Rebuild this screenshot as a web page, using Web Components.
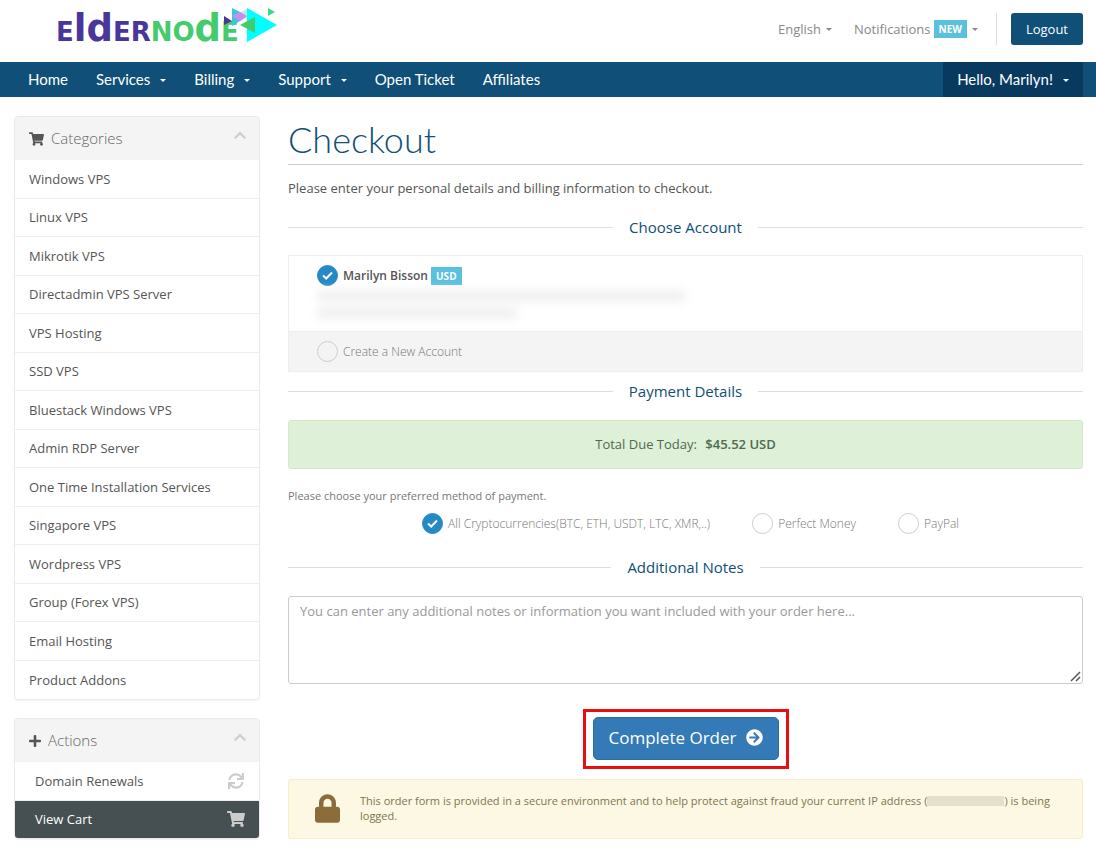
<!DOCTYPE html>
<html lang="en">
<head>
<meta charset="utf-8">
<meta name="viewport" content="width=device-width, initial-scale=1">
<title>Checkout - Eldernode</title>
<style>
body {
  margin: 0;
  background: #fff;
  color: #555;
  font: 13px/18px "Open Sans", "Noto Sans", sans-serif;
}
</style>
</head>
<body>
<checkout-page></checkout-page>

<script>
const icons = {
  cart: ['0 0 576 512', 'M528.12 301.319l47.273-208C578.806 78.301 567.391 64 551.99 64H159.208l-9.166-44.81C147.758 8.021 137.93 0 126.529 0H24C10.745 0 0 10.745 0 24v16c0 13.255 10.745 24 24 24h69.883l70.248 343.435C147.325 417.1 136 435.222 136 456c0 30.928 25.072 56 56 56s56-25.072 56-56c0-15.674-6.447-29.835-16.824-40h209.647C430.447 426.165 424 440.326 424 456c0 30.928 25.072 56 56 56s56-25.072 56-56c0-22.172-12.888-41.332-31.579-50.405l5.517-24.276c3.413-15.018-8.002-29.319-23.403-29.319H218.117l-6.545-32h293.145c11.206 0 20.92-7.754 23.403-18.681z'],
  plus: ['0 0 448 512', 'M416 208H272V64c0-17.67-14.33-32-32-32h-32c-17.67 0-32 14.33-32 32v144H32c-17.67 0-32 14.33-32 32v32c0 17.67 14.33 32 32 32h144v144c0 17.67 14.33 32 32 32h32c17.67 0 32-14.33 32-32V304h144c17.67 0 32-14.33 32-32v-32c0-17.67-14.33-32-32-32z'],
  lock: ['0 0 448 512', 'M400 224h-24v-72C376 68.2 307.8 0 224 0S72 68.2 72 152v72H48c-26.5 0-48 21.5-48 48v192c0 26.5 21.5 48 48 48h352c26.5 0 48-21.5 48-48V272c0-26.5-21.5-48-48-48zm-104 0H152v-72c0-39.7 32.3-72 72-72s72 32.3 72 72v72z'],
  arrow: ['0 0 512 512', 'M256 8c137 0 248 111 248 248S393 504 256 504 8 393 8 256 119 8 256 8zm-28.9 143.6l75.5 72.4H120c-13.3 0-24 10.7-24 24v16c0 13.3 10.7 24 24 24h182.6l-75.5 72.4c-9.7 9.3-9.9 24.8-.4 34.3l11 10.9c9.4 9.4 24.6 9.4 33.9 0L404.3 273c9.4-9.4 9.4-24.6 0-33.9L271.6 106.3c-9.4-9.4-24.6-9.4-33.9 0l-11 10.9c-9.5 9.6-9.3 25.1.4 34.4z'],
  refresh: ['0 0 512 512', 'M440.65 12.57l4 82.77A247.16 247.16 0 0 0 255.83 8C134.73 8 33.91 94.92 12.29 209.82A12 12 0 0 0 24.09 224h49.05a12 12 0 0 0 11.67-9.26 175.91 175.91 0 0 1 317-56.94l-101.46-4.86a12 12 0 0 0-12.57 12v47.41a12 12 0 0 0 12 12H500a12 12 0 0 0 12-12V12a12 12 0 0 0-12-12h-47.37a12 12 0 0 0-11.98 12.57zM255.83 432a175.61 175.61 0 0 1-146-77.8l101.8 4.87a12 12 0 0 0 12.57-12v-47.4a12 12 0 0 0-12-12H12a12 12 0 0 0-12 12V500a12 12 0 0 0 12 12h47.35a12 12 0 0 0 12-12.6l-4.15-82.57A247.17 247.17 0 0 0 255.83 504c121.11 0 221.93-86.92 243.55-201.82a12 12 0 0 0-11.8-14.18h-49.05a12 12 0 0 0-11.67 9.26A175.86 175.86 0 0 1 255.83 432z'],
  chevron: ['0 0 12 12', 'M0 7.6L6 1.6l6 6-1.5 1.5L6 4.6 1.5 9.1z'],
  caret: ['0 0 6 3', 'M0 0h6L3 3z']
};

// Attach an open shadow root filled with the given markup
function render(el, html) {
  const template = document.createElement('template');
  template.innerHTML = html;
  el.attachShadow({ mode: 'open' }).appendChild(template.content.cloneNode(true));
}

class UiIcon extends HTMLElement {
  constructor() {
    super();
    const [box, path] = icons[this.getAttribute('name')];
    render(this, `
<style>
:host { display: inline-flex; flex: none; }
svg { width: 100%; height: 100%; fill: currentColor; }
</style>
<svg viewBox="${box}" aria-hidden="true"><path d="${path}"/></svg>`);
  }
}

class UiBadge extends HTMLElement {
  constructor() {
    super();
    render(this, `
<style>
:host {
  display: inline-block;
  padding: 0 5px;
  background: #5bc0de;
  color: #fff;
  font-size: 10px;
  font-weight: 700;
  line-height: 18px;
}
</style>
<slot></slot>`);
  }
}

class SiteLogo extends HTMLElement {
  constructor() {
    super();
    render(this, `
<style>
:host { display: block; position: relative; }
a {
  display: block;
  color: #483699;
  font: 700 37px/44px "DejaVu Sans", sans-serif;
  font-variant: small-caps;
  text-decoration: none;
}
.tall { font-variant: normal; }
.green { color: #44cb6d; }
svg { position: absolute; left: 167px; top: 1px; width: 56px; height: 38px; }
</style>
<a href="#">e<span class="tall">ld</span>er<span class="green">no<span class="tall">d</span>e</span></a>
<svg viewBox="0 0 56 38" aria-hidden="true">
  <path fill="#3fc4d8" d="M9 0l16 8-16 10z"/>
  <path fill="#b9efdc" d="M18 4l6-3v12z"/>
  <path fill="#c88cf2" d="M9 8l8-4 7 4-7 5z"/>
  <path fill="#0ff" d="M24 0l30 17-30 17z"/>
  <path fill="#483699" d="M1 8l8 5-8 4z"/>
  <path fill="#44cb6d" d="M32 9v16l-15-8z"/>
  <path fill="#35d98c" d="M45 0l7 4-7 4z"/>
</svg>`);
  }
}

class SiteHeader extends HTMLElement {
  constructor() {
    super();
    render(this, `
<style>
:host {
  display: flex;
  align-items: center;
  justify-content: space-between;
  padding: 6px 13px 10px 56px;
  min-height: 46px;
}
.tools { display: flex; align-items: center; }
button {
  display: flex;
  align-items: center;
  padding: 0;
  border: 0;
  background: none;
  color: #888;
  font: inherit;
  cursor: pointer;
}
button + button { margin-left: 22px; }
ui-badge { margin: 0 5px 0 3px; }
ui-icon { width: 6px; height: 3px; }
.lang ui-icon { margin-left: 5px; }
.logout {
  margin-left: 14px;
  padding: 7px 15px;
  border-radius: 3px;
  background: #0f4f78;
  color: #fff;
  text-decoration: none;
}
.line { width: 1px; height: 32px; margin-left: 18px; background: #ddd; }
</style>
<site-logo></site-logo>
<div class="tools">
  <button class="lang">English <ui-icon name="caret"></ui-icon></button>
  <button>Notifications <ui-badge>NEW</ui-badge><ui-icon name="caret"></ui-icon></button>
  <span class="line"></span>
  <a class="logout" href="#">Logout</a>
</div>`);
  }
}

class NavItem extends HTMLElement {
  constructor() {
    super();
    render(this, `
<style>
:host { display: block; }
:host([active]) { background: #083a60; }
a {
  display: flex;
  align-items: center;
  padding: 0 14px 1px;
  color: #fff;
  font: 15px/34px Lato, sans-serif;
  text-decoration: none;
}
ui-icon { width: 6px; height: 3px; margin: 3px 0 0 10px; }
</style>
<a href="#"><slot></slot>${this.hasAttribute('menu') ? '<ui-icon name="caret"></ui-icon>' : ''}</a>`);
  }
}

class SiteNav extends HTMLElement {
  constructor() {
    super();
    render(this, `
<style>
:host { display: block; background: #0f4f78; }
nav { display: flex; padding: 0 13px 0 14px; }
.user { margin-left: auto; }
</style>
<nav>
  <nav-item>Home</nav-item>
  <nav-item menu>Services</nav-item>
  <nav-item menu>Billing</nav-item>
  <nav-item menu>Support</nav-item>
  <nav-item>Open Ticket</nav-item>
  <nav-item>Affiliates</nav-item>
  <nav-item class="user" menu active>Hello, Marilyn!</nav-item>
</nav>`);
  }
}

class SidePanel extends HTMLElement {
  constructor() {
    super();
    render(this, `
<style>
:host {
  display: block;
  overflow: hidden;
  border: 1px solid #eaeaea;
  border-radius: 4px;
  box-shadow: 0 1px 1px rgba(0, 0, 0, .05);
}
header {
  display: flex;
  align-items: center;
  padding: 11px 13px 11px 14px;
  background: #f4f4f4;
}
header > ui-icon { width: 15px; height: 14px; color: #555; }
:host([icon="plus"]) header > ui-icon { width: 12px; }
h3 {
  flex: 1;
  margin: 0 0 0 7px;
  color: #666;
  font-size: 15px;
  font-weight: 300;
  line-height: 21px;
}
button { display: flex; padding: 0 0 6px; border: 0; background: none; color: #ccc; cursor: pointer; }
button ui-icon { width: 12px; height: 12px; }
.items { display: grid; }
.items[hidden] { display: none; }
:host([icon="cart"]) .items { grid-auto-rows: 1fr; min-height: 539px; }
</style>
<header>
  <ui-icon name="${this.getAttribute('icon')}"></ui-icon>
  <h3>${this.getAttribute('heading')}</h3>
  <button aria-label="Toggle"><ui-icon name="chevron"></ui-icon></button>
</header>
<div class="items"><slot></slot></div>`);

    this.shadowRoot.querySelector('button').addEventListener('click', () => {
      const items = this.shadowRoot.querySelector('.items');
      items.hidden = !items.hidden;
    });
  }
}

class PanelItem extends HTMLElement {
  constructor() {
    super();
    const icon = this.getAttribute('icon');
    render(this, `
<style>
:host { display: grid; border-bottom: 1px solid #eee; }
:host(:last-of-type) { border-bottom: 0; }
a {
  display: flex;
  align-items: center;
  justify-content: space-between;
  padding: 9px 14px;
  color: #555;
  text-decoration: none;
}
a.has-icon { padding: 10px 14px 10px 20px; }
:host([active]) a { padding-top: 9px; background: #464f51; color: #fff; }
ui-icon { width: 18px; height: 16px; color: #ccc; }
</style>
<a href="#" class="${icon ? 'has-icon' : ''}"><slot></slot>${icon ? `<ui-icon name="${icon}"></ui-icon>` : ''}</a>`);
  }
}

class SubHeading extends HTMLElement {
  constructor() {
    super();
    render(this, `
<style>
:host { display: flex; align-items: center; gap: 16px; }
:host::before, :host::after { content: ""; flex: 1; height: 1px; background: #ddd; }
h2 { margin: 0; color: #0f4f78; font-size: 15px; font-weight: 400; line-height: 20px; }
</style>
<h2><slot></slot></h2>`);
  }
}

class RadioOption extends HTMLElement {
  constructor() {
    super();
    render(this, `
<style>
:host { display: block; color: #777; font-weight: 300; }
label { display: flex; align-items: center; gap: 5px; cursor: pointer; }
.dot { display: grid; }
.dot > * { grid-area: 1 / 1; }
input {
  appearance: none;
  box-sizing: border-box;
  width: 21px;
  height: 21px;
  margin: 0;
  border: 1px solid #ccc;
  border-radius: 50%;
  background: transparent;
}
input:checked { border-color: #2489c5; background: #2489c5; }
svg { width: 21px; height: 21px; fill: none; stroke: #fff; stroke-width: 2; pointer-events: none; visibility: hidden; }
input:checked + svg { visibility: visible; }
</style>
<label>
  <span class="dot">
    <input type="radio"${this.hasAttribute('checked') ? ' checked' : ''}>
    <svg viewBox="0 0 21 21" aria-hidden="true"><path d="M6 10.5l3.2 3 5.8-6"/></svg>
  </span>
  <span><slot></slot></span>
</label>`);
    this.input = this.shadowRoot.querySelector('input');
    this.input.addEventListener('change', () => {
      this.dispatchEvent(new CustomEvent('pick', { bubbles: true }));
    });
  }
}

// Radios in separate shadow roots don't share a name, so the group clears the others
class RadioGroup extends HTMLElement {
  constructor() {
    super();
    render(this, `<style>:host { display: block; }</style><slot></slot>`);
    this.addEventListener('pick', (e) => {
      this.querySelectorAll('radio-option').forEach((option) => {
        option.input.checked = option === e.target;
      });
    });
  }
}

class CheckoutForm extends HTMLElement {
  constructor() {
    super();
    render(this, `
<style>
:host { display: block; }
h1 {
  margin: 0;
  padding: 3px 0 5px;
  border-bottom: 1px solid #ccc;
  color: #0f4f78;
  font: 300 36px/40px Lato, sans-serif;
}
p { margin: 0; }
.intro { margin: 14px 0 20px; }
.accounts { margin: 18px 0 9px; border: 1px solid #eee; }
.account { padding: 9px 28px 7px; }
.account + .account { padding: 9px 28px; border-top: 1px solid #eee; background: #f4f4f4; }
.name { color: #555; font-weight: 600; font-size: 12px; }
.account radio-option { font-size: 12px; }
.hidden-lines { display: grid; gap: 5px; padding: 4px 0 5px; filter: blur(4px); }
.hidden-lines i { width: 368px; height: 12px; background: #f1f1f1; }
.hidden-lines i + i { width: 200px; }
.total {
  margin: 19px 0 18px;
  padding: 14px;
  border: 1px solid #d6e9c6;
  border-radius: 3px;
  background: #dff0d8;
  color: #4d6b4e;
  line-height: 19px;
  text-align: center;
}
.total strong { margin-left: 5px; font-weight: 600; }
.methods { display: flex; justify-content: center; flex-wrap: wrap; gap: 42px; padding-left: 10px; margin: 8px 0 23px; font-size: 12px; }
.hint { color: #777; font-size: 11px; }
textarea {
  display: block;
  box-sizing: border-box;
  width: 100%;
  height: 88px;
  margin: 19px 0 25px;
  padding: 5px 11px;
  border: 1px solid #ccc;
  border-radius: 3px;
  color: #555;
  font: inherit;
  resize: vertical;
}
textarea::placeholder { color: #999; }
textarea::-webkit-resizer {
  background: url("data:image/svg+xml,%3Csvg xmlns='http://www.w3.org/2000/svg' viewBox='0 0 15 15'%3E%3Cpath d='M4 13l9-9M9 13l4-4' stroke='%23555' stroke-width='1.5'/%3E%3C/svg%3E");
}
.submit { width: fit-content; margin: 0 auto 10px; padding: 5px 7px 6px; border: 3px solid #e90e10; }
.submit button {
  display: flex;
  align-items: center;
  gap: 9px;
  padding: 8px 15px 10px;
  border: 1px solid #2e6da4;
  border-radius: 5px;
  background: #337ab7;
  color: #fff;
  font: 17px/23px "Open Sans", sans-serif;
  cursor: pointer;
}
.submit ui-icon { width: 17px; height: 17px; }
.notice {
  display: flex;
  align-items: center;
  gap: 20px;
  padding: 13px 17px 15px 26px;
  border: 1px solid #faebcc;
  border-radius: 3px;
  background: #fcf8e3;
  color: #7f7550;
  font-size: 11px;
  line-height: 15px;
}
.notice ui-icon { width: 25px; height: 29px; color: #8a6d3b; }
.masked { display: inline-block; width: 77px; height: 10px; background: #e3e0cb; vertical-align: -1px; }
</style>
<h1>Checkout</h1>
<p class="intro">Please enter your personal details and billing information to checkout.</p>

<sub-heading>Choose Account</sub-heading>
<radio-group class="accounts">
  <div class="account">
    <radio-option checked><span class="name">Marilyn Bisson</span> <ui-badge>USD</ui-badge></radio-option>
    <div class="hidden-lines"><i></i><i></i></div>
  </div>
  <div class="account"><radio-option>Create a New Account</radio-option></div>
</radio-group>

<sub-heading>Payment Details</sub-heading>
<div class="total">Total Due Today: <strong>$45.52 USD</strong></div>
<p class="hint">Please choose your preferred method of payment.</p>
<radio-group>
  <div class="methods">
    <radio-option checked>All Cryptocurrencies(BTC, ETH, USDT, LTC, XMR,..)</radio-option>
    <radio-option>Perfect Money</radio-option>
    <radio-option>PayPal</radio-option>
  </div>
</radio-group>

<sub-heading>Additional Notes</sub-heading>
<textarea aria-label="Additional Notes" placeholder="You can enter any additional notes or information you want included with your order here..."></textarea>

<div class="submit"><button>Complete Order <ui-icon name="arrow"></ui-icon></button></div>
<div class="notice">
  <ui-icon name="lock"></ui-icon>
  <p>This order form is provided in a secure environment and to help protect against fraud your current IP address (<span class="masked"></span><span>) is being</span> <span>logged.</span></p>
</div>`);
  }
}

class CheckoutPage extends HTMLElement {
  constructor() {
    super();
    render(this, `
<style>
:host { display: block; }
.body { display: grid; grid-template-columns: 246px minmax(0, 1fr); gap: 28px; padding: 19px 13px 10px 14px; }
aside { display: grid; align-content: start; gap: 18px; }
</style>
<site-header></site-header>
<site-nav></site-nav>
<div class="body">
  <aside>
    <side-panel icon="cart" heading="Categories">
      <panel-item>Windows VPS</panel-item>
      <panel-item>Linux VPS</panel-item>
      <panel-item>Mikrotik VPS</panel-item>
      <panel-item>Directadmin VPS Server</panel-item>
      <panel-item>VPS Hosting</panel-item>
      <panel-item>SSD VPS</panel-item>
      <panel-item>Bluestack Windows VPS</panel-item>
      <panel-item>Admin RDP Server</panel-item>
      <panel-item>One Time Installation Services</panel-item>
      <panel-item>Singapore VPS</panel-item>
      <panel-item>Wordpress VPS</panel-item>
      <panel-item>Group (Forex VPS)</panel-item>
      <panel-item>Email Hosting</panel-item>
      <panel-item>Product Addons</panel-item>
    </side-panel>
    <side-panel icon="plus" heading="Actions">
      <panel-item icon="refresh">Domain Renewals</panel-item>
      <panel-item icon="cart" active>View Cart</panel-item>
    </side-panel>
  </aside>
  <main><checkout-form></checkout-form></main>
</div>`);
  }
}

customElements.define('ui-icon', UiIcon);
customElements.define('ui-badge', UiBadge);
customElements.define('site-logo', SiteLogo);
customElements.define('site-header', SiteHeader);
customElements.define('nav-item', NavItem);
customElements.define('site-nav', SiteNav);
customElements.define('side-panel', SidePanel);
customElements.define('panel-item', PanelItem);
customElements.define('sub-heading', SubHeading);
customElements.define('radio-option', RadioOption);
customElements.define('radio-group', RadioGroup);
customElements.define('checkout-form', CheckoutForm);
customElements.define('checkout-page', CheckoutPage);
</script>
</body>
</html>
